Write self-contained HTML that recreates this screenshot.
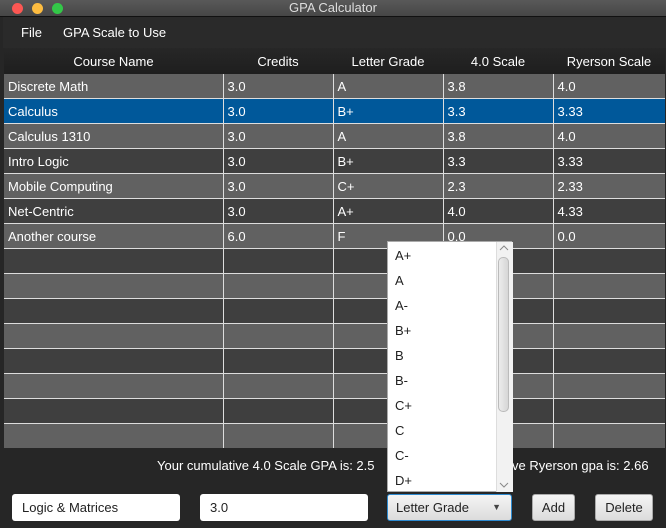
<!DOCTYPE html><html><head><style>
body{margin:0;width:666px;height:528px;background:#262626;font-family:"Liberation Sans",sans-serif;position:relative;overflow:hidden;font-size:13px}
.t{position:absolute;left:0;top:0;width:666px;height:16px;background:linear-gradient(#595959,#464646);border-bottom:1px solid #111;color:#ddd;text-align:center;font-size:13px;line-height:16px}
.d{position:absolute;top:3px;width:11px;height:11px;border-radius:50%}
.m{position:absolute;left:3px;top:17px;width:663px;height:31px;background:#2a2a2a;color:#fff;font-size:13px}
.m span{position:absolute;top:8px}
table{position:absolute;left:4px;top:48px;border-collapse:collapse;width:661px;table-layout:fixed;color:#fff}
th{height:26px;background:linear-gradient(#272727,#1e1e1e);font-weight:normal;font-size:13px;padding:0}
td{height:24px;border:1px solid #ddd;border-top:none;padding:0 0 0 4px;font-size:13px;white-space:nowrap;overflow:hidden}
tr:first-child td{border-top:none}
tr.o td{background:#616161}tr.e td{background:#3f3f3f}tr.s td{background:#00589a}
td:first-child{border-left:none}td:last-child{border-right:none}
.dd{position:absolute;left:387px;top:241px;width:125px;height:251px;background:#fff;border:1px solid #aaa;box-sizing:border-box;overflow:hidden}
.dd div{position:absolute;left:7px;font-size:13px;color:#222}
.sb{position:absolute;left:496px;top:242px;width:16px;height:250px;background:#f2f2f2;border-left:1px solid #ddd}
.th{position:absolute;left:498px;top:257px;width:11px;height:155px;border:1px solid #bbb;border-radius:5px;background:linear-gradient(90deg,#ececec,#d6d6d6);box-sizing:border-box}
.in{position:absolute;top:494px;height:27px;background:#fff;border-radius:3px;box-sizing:border-box;padding:6px 0 0 10px;color:#222;font-size:13px}
.bt{position:absolute;top:494px;height:27px;background:linear-gradient(#f4f4f4,#dcdcdc);border:1px solid #aaa;border-radius:3px;box-sizing:border-box;text-align:center;line-height:25px;color:#222}
</style></head><body>
<div class="t">GPA Calculator</div>
<div class="d" style="left:12px;background:#fc5753"></div><div class="d" style="left:32px;background:#fdbc40"></div><div class="d" style="left:52px;background:#33c748"></div>
<div class="m"><span style="left:18px">File</span><span style="left:60px">GPA Scale to Use</span></div>
<table>
<colgroup><col style="width:219px"><col style="width:110px"><col style="width:110px"><col style="width:110px"><col></colgroup>
<tr><th>Course Name</th><th>Credits</th><th>Letter Grade</th><th>4.0 Scale</th><th>Ryerson Scale</th></tr>
<tr class="o"><td>Discrete Math</td><td>3.0</td><td>A</td><td>3.8</td><td>4.0</td></tr>
<tr class="s"><td>Calculus</td><td>3.0</td><td>B+</td><td>3.3</td><td>3.33</td></tr>
<tr class="o"><td>Calculus 1310</td><td>3.0</td><td>A</td><td>3.8</td><td>4.0</td></tr>
<tr class="e"><td>Intro Logic</td><td>3.0</td><td>B+</td><td>3.3</td><td>3.33</td></tr>
<tr class="o"><td>Mobile Computing</td><td>3.0</td><td>C+</td><td>2.3</td><td>2.33</td></tr>
<tr class="e"><td>Net-Centric</td><td>3.0</td><td>A+</td><td>4.0</td><td>4.33</td></tr>
<tr class="o"><td>Another course</td><td>6.0</td><td>F</td><td>0.0</td><td>0.0</td></tr>
<tr class="e"><td></td><td></td><td></td><td></td><td></td></tr>
<tr class="o"><td></td><td></td><td></td><td></td><td></td></tr>
<tr class="e"><td></td><td></td><td></td><td></td><td></td></tr>
<tr class="o"><td></td><td></td><td></td><td></td><td></td></tr>
<tr class="e"><td></td><td></td><td></td><td></td><td></td></tr>
<tr class="o"><td></td><td></td><td></td><td></td><td></td></tr>
<tr class="e"><td></td><td></td><td></td><td></td><td></td></tr>
<tr class="o"><td style="border-bottom:none;height:22px"></td><td style="border-bottom:none"></td><td style="border-bottom:none"></td><td style="border-bottom:none"></td><td style="border-bottom:none"></td></tr>
</table>
<div style="position:absolute;left:157px;top:458px;color:#fff;font-size:13px">Your cumulative 4.0 Scale GPA is: 2.5</div>
<div style="position:absolute;left:512px;top:458px;color:#fff;font-size:13px">ve Ryerson gpa is: 2.66</div>
<div class="dd">
<div style="top:6px">A+</div><div style="top:31px">A</div><div style="top:56px">A-</div><div style="top:81px">B+</div><div style="top:106px">B</div><div style="top:131px">B-</div><div style="top:156px">C+</div><div style="top:181px">C</div><div style="top:206px">C-</div><div style="top:231px">D+</div>
</div>
<div class="sb"></div><div class="th"></div>
<svg style="position:absolute;left:498px;top:244px" width="12" height="8"><path d="M2 6 L6 2 L10 6" fill="none" stroke="#888" stroke-width="1"/></svg>
<svg style="position:absolute;left:498px;top:481px" width="12" height="8"><path d="M2 2 L6 6 L10 2" fill="none" stroke="#888" stroke-width="1"/></svg>
<div class="in" style="left:12px;width:168px">Logic &amp; Matrices</div>
<div class="in" style="left:200px;width:168px">3.0</div>
<div class="bt" style="left:387px;width:125px;border:1px solid #2d8ad0;text-align:left;padding-left:8px">Letter Grade<span style="position:absolute;right:10px;font-size:9px;color:#444">&#9660;</span></div>
<div class="bt" style="left:532px;width:43px">Add</div>
<div class="bt" style="left:595px;width:58px">Delete</div>
</body></html>
